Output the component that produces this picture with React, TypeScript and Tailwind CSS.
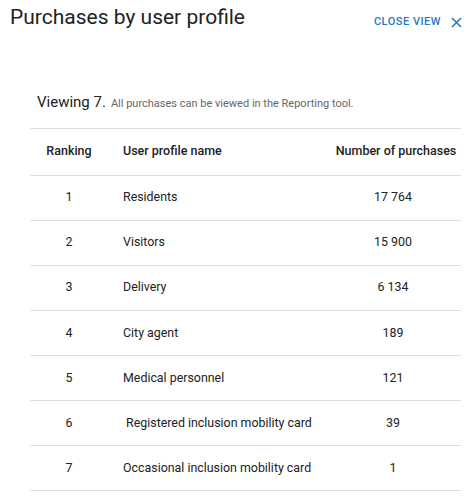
export default function App() {
  const rows: [string, string, string][] = [
    ["1", "Residents", "17 764"],
    ["2", "Visitors", "15 900"],
    ["3", "Delivery", "6 134"],
    ["4", "City agent", "189"],
    ["5", "Medical personnel", "121"],
    ["6", " Registered inclusion mobility card", "39"],
    ["7", "Occasional inclusion mobility card", "1"],
  ];
  return (
    <div className="w-[470px] h-[496px] bg-white overflow-hidden text-[#222]" style={{ fontFamily: "Roboto, sans-serif" }}>
      <div className="flex items-start justify-between pl-[10px] pr-[8px] pt-[3px]">
        <div className="text-[21px] leading-[28px] text-[#222]">Purchases by user profile</div>
        <div className="flex items-center gap-[10px] mt-[11px] text-[#1f78c1]">
          <span className="text-[11px] font-medium tracking-[0.5px]">CLOSE VIEW</span>
          <svg width="11" height="11" viewBox="0 0 11 11" stroke="currentColor" strokeWidth="1.5"><path d="M1 1L10 10M10 1L1 10" /></svg>
        </div>
      </div>
      <div className="pl-[37px] mt-[60px] flex items-baseline gap-[5px]">
        <span className="text-[15px]">Viewing 7.</span>
        <span className="text-[11px] text-[#666]">All purchases can be viewed in the Reporting tool.</span>
      </div>
      <div className="ml-[30px] w-[431px] mt-[14px] border-t border-[#ddd]">
        <div className="flex h-[47px] items-center border-b border-[#ddd] text-[12.5px] font-medium">
          <div className="w-[78px] text-center">Ranking</div>
          <div className="flex-1 pl-[15px]">User profile name</div>
          <div className="w-[130px] text-center">Number of purchases</div>
        </div>
        {rows.map((r) => (
          <div key={r[0]} className="flex h-[45.1px] items-center border-b border-[#ddd] text-[12.4px]">
            <div className="w-[78px] text-center">{r[0]}</div>
            <div className="flex-1 pl-[15px] whitespace-pre">{r[1]}</div>
            <div className="w-[130px] text-center pr-[6px]">{r[2]}</div>
          </div>
        ))}
      </div>
    </div>
  );
}
